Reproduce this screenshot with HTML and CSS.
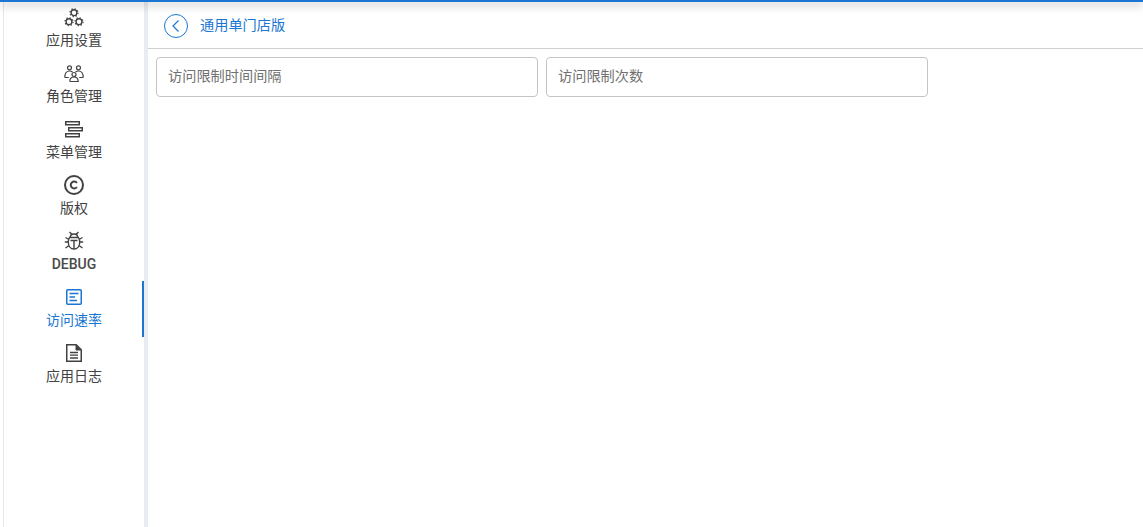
FILE: index.html
```html
<!DOCTYPE html>
<html lang="zh-CN">
<head>
    <meta charset="UTF-8">
    <title>访问速率</title>
    <link rel="stylesheet" href="styles.css">
</head>
<body>
    <div class="top-bar"></div>
    <div class="layout">
        <nav class="sidebar">
            <a class="nav-item">
                <svg class="nav-icon" viewBox="0 0 20 20" fill="none" stroke="currentColor">
                    <g stroke-width="1.400">
                        <circle cx="10" cy="5.700" r="2.900"/>
                        <circle cx="5" cy="14.700" r="2.900"/>
                        <circle cx="15" cy="14.700" r="2.900"/>
                    </g>
                    <g stroke-width="1.200" stroke-dasharray="1.300 1.850">
                        <circle cx="10" cy="5.700" r="4"/>
                        <circle cx="5" cy="14.700" r="4"/>
                        <circle cx="15" cy="14.700" r="4"/>
                    </g>
                </svg>
                <span>应用设置</span>
            </a>
            <a class="nav-item">
                <svg class="nav-icon" viewBox="0 0 20 20" fill="none" stroke="currentColor" stroke-width="1.200">
                    <circle cx="5.500" cy="4.800" r="2"/>
                    <circle cx="14.500" cy="4.800" r="2"/>
                    <circle cx="10" cy="11.500" r="2"/>
                    <path d="M.8 14.500c0-4 1.500-6.500 4.700-6.500 1.300 0 2.300.4 3 1.200M19.200 14.500c0-4-1.500-6.500-4.700-6.500-1.300 0-2.300.4-3 1.200"/>
                    <path d="M.8 14.500h4M19.200 14.500h-4M5.800 18.500c0-3 1.500-4.500 4.200-4.500s4.200 1.500 4.200 4.500h-8.400"/>
                </svg>
                <span>角色管理</span>
            </a>
            <a class="nav-item">
                <svg class="nav-icon" viewBox="0 0 20 20" fill="none" stroke="currentColor" stroke-width="1.500">
                    <rect x="1.750" y="2.750" width="13.500" height="3"/>
                    <rect x="4.750" y="8.750" width="13.500" height="3"/>
                    <rect x="1.750" y="14.750" width="13.500" height="3"/>
                </svg>
                <span>菜单管理</span>
            </a>
            <a class="nav-item">
                <svg class="nav-icon" viewBox="0 0 20 20" fill="none" stroke="currentColor">
                    <circle cx="10" cy="10" r="9" stroke-width="2"/>
                    <path d="M12.900 8A3.400 3.400 0 1 0 12.900 12" stroke-width="2"/>
                </svg>
                <span>版权</span>
            </a>
            <a class="nav-item">
                <svg class="nav-icon" viewBox="0 0 20 20" fill="none" stroke="currentColor" stroke-width="1.400">
                    <path d="M5.500 6.500h9c.8 1.300 1.200 2.800 1.200 4.800 0 3.800-2.300 6.700-5.700 6.700s-5.700-2.900-5.700-6.700c0-2 .4-3.500 1.200-4.800z"/>
                    <path d="M6.300 6.500C6.300 4.300 8 3 10 3s3.700 1.300 3.700 3.500M6.500 9.500h7M10 9.500V18M5.500 1l2.500 2.500M14.500 1 12 3.500M.8 11h3.500M15.700 11h3.500M1.500 6.500l3.500 2M18.500 6.500l-3.500 2M1.500 17l3.500-2.500M18.500 17 15 14.500"/>
                </svg>
                <span class="latin">DEBUG</span>
            </a>
            <a class="nav-item active">
                <svg class="nav-icon" viewBox="0 0 20 20" fill="none" stroke="currentColor" stroke-width="1.500">
                    <rect x="2.750" y="2.750" width="14.500" height="14.500" rx="1"/>
                    <path d="M5.500 6.500h9M5.500 10h5.500M5.500 13.500h7.500"/>
                </svg>
                <span>访问速率</span>
            </a>
            <a class="nav-item">
                <svg class="nav-icon" viewBox="0 0 20 20" fill="none" stroke="currentColor" stroke-width="1.500">
                    <path d="M2.750 1.750h9.500l5 5v11.500h-14.500z"/>
                    <path d="M12 2v5h5" fill="currentColor" stroke-width="1"/>
                    <path d="M6 9.500h8M6 12.200h8M6 15h8" stroke-width="1.300"/>
                </svg>
                <span>应用日志</span>
            </a>
        </nav>
        <main class="content">
            <header class="page-header">
                <svg class="back-icon" viewBox="0 0 24 24" fill="none" stroke="currentColor">
                    <circle cx="12" cy="12" r="11.500"/>
                    <path d="M14.500 6.500 9 12l5.500 5.500" stroke-width="1.200"/>
                </svg>
                <span class="page-title">通用单门店版</span>
            </header>
            <form class="fields">
                <div class="field">访问限制时间间隔</div>
                <div class="field">访问限制次数</div>
            </form>
        </main>
    </div>
</body>
</html>
```

FILE: styles.css
```css
* {
    box-sizing: border-box;
}

html, body {
    height: 100%;
}

body {
    margin: 0;
    overflow: hidden;
    background-color: #fff;
    color: #424242;
    font-family: Roboto, "Noto Sans CJK SC", sans-serif;
    font-size: 14px;
}

.top-bar {
    position: absolute;
    top: 0;
    left: 0;
    right: 0;
    height: 2px;
    background-color: #1976d2;
    box-shadow: 0 2px 10px rgba(0, 0, 0, 0.5);
    z-index: 2;
}

.layout {
    display: flex;
    height: 100%;
}

.sidebar {
    width: 145px;
    margin-left: 3px;
    padding-top: 1px;
    flex-shrink: 0;
    border-left: 1px solid #e6e6e6;
    border-right: 4px solid #e9edf3;
}

.nav-item {
    display: flex;
    flex-direction: column;
    align-items: center;
    height: 56px;
    padding-top: 6px;
    color: #424242;
}

.nav-item span {
    margin-top: 3px;
    line-height: 20px;
}

.nav-item .latin {
    font-weight: 500;
    color: #4a4a4a;
}

.nav-item.active {
    color: #1976d2;
    box-shadow: inset -2px 0 0 #1976d2;
}

.nav-icon {
    width: 20px;
    height: 20px;
}

.content {
    flex: 1;
}

.page-header {
    display: flex;
    align-items: center;
    height: 49px;
    padding: 4px 0 0 16px;
    border-bottom: 1px solid #d0d0d4;
    color: #1976d2;
}

.back-icon {
    width: 24px;
    height: 24px;
}

.page-title {
    margin: 0 0 4px 12px;
    font-size: 14.2px;
}

.fields {
    display: flex;
    gap: 8px;
    padding: 8px;
}

.field {
    width: 382px;
    height: 40px;
    padding: 0 11px;
    border: 1px solid #c4c4c4;
    border-radius: 4px;
    color: #707070;
    font-size: 14.2px;
    line-height: 37px;
}
```
